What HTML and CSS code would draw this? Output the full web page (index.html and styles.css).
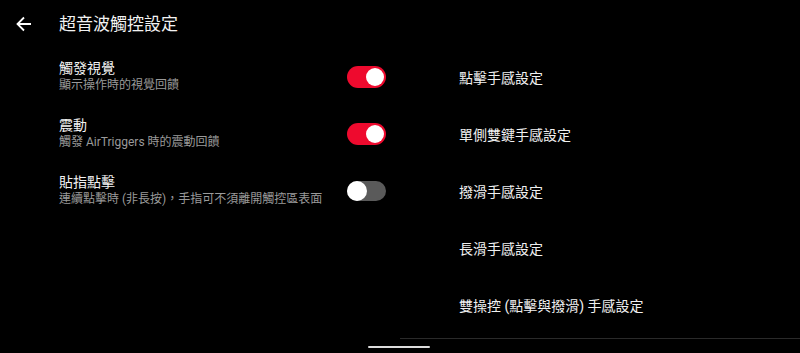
FILE: index.html
```html
<!DOCTYPE html>
<html lang="zh-Hant">
<head>
<meta charset="utf-8">
<link rel="stylesheet" href="styles.css">
</head>
<body>
<div class="screen">
  <header class="header">
    <svg class="back" width="16" height="16" viewBox="0 0 16 16">
      <path d="M15 8H2M8 1.5L1.5 8 8 14.5" fill="none" stroke="#fff" stroke-width="1.8"/>
    </svg>
    <h1 class="title">超音波觸控設定</h1>
  </header>
  <main class="content">
    <section class="left">
      <div class="row">
        <div class="texts">
          <div class="label">觸發視覺</div>
          <div class="desc">顯示操作時的視覺回饋</div>
        </div>
        <div class="switch on"><span class="thumb"></span></div>
      </div>
      <div class="row">
        <div class="texts">
          <div class="label">震動</div>
          <div class="desc">觸發 AirTriggers 時的震動回饋</div>
        </div>
        <div class="switch on"><span class="thumb"></span></div>
      </div>
      <div class="row">
        <div class="texts">
          <div class="label">貼指點擊</div>
          <div class="desc">連續點擊時 (非長按)，手指可不須離開觸控區表面</div>
        </div>
        <div class="switch off"><span class="thumb"></span></div>
      </div>
    </section>
    <section class="right">
      <div class="item">點擊手感設定</div>
      <div class="item">單側雙鍵手感設定</div>
      <div class="item">撥滑手感設定</div>
      <div class="item">長滑手感設定</div>
      <div class="item">雙操控 (點擊與撥滑) 手感設定</div>
      <div class="divider"></div>
    </section>
  </main>
  <div class="home"></div>
</div>
</body>
</html>
```

FILE: styles.css
```css
html, body {
  margin: 0;
  padding: 0;
  background: #000;
}
.screen {
  width: 800px;
  height: 353px;
  background: #000;
  position: relative;
  overflow: hidden;
  font-family: Roboto, "Noto Sans CJK TC", sans-serif;
  color: #f0f0f0;
}
.header {
  height: 48px;
  display: flex;
  align-items: center;
}
.back {
  margin-left: 16px;
  width: 16px;
  height: 16px;
}
.title {
  margin: 0 0 0 27px;
  font-size: 17px;
  font-weight: 400;
  color: #f2f2f2;
  line-height: 20px;
}
.content {
  display: flex;
}
.left {
  width: 400px;
  box-sizing: border-box;
  padding: 0 14px 0 59px;
}
.row {
  height: 57px;
  display: flex;
  align-items: center;
  justify-content: space-between;
}
.label {
  font-size: 14px;
  line-height: 17px;
  color: #f2f2f2;
}
.desc {
  font-size: 12px;
  line-height: 15px;
  color: #9a9a9a;
  margin-top: 1px;
}
.switch {
  width: 39px;
  height: 22px;
  border-radius: 11px;
  position: relative;
  flex: none;
}
.switch.on { background: #ee0a2e; }
.switch.off { background: #5a5a5a; height: 20px; border-radius: 10px; }
.thumb {
  position: absolute;
  top: 2px;
  width: 18px;
  height: 18px;
  border-radius: 50%;
  background: #fff;
}
.switch.on .thumb { right: 2px; }
.switch.off .thumb { left: 0; top: 0; width: 20px; height: 20px; }
.right {
  width: 400px;
  display: flex;
  flex-direction: column;
}
.item {
  height: 57px;
  display: flex;
  align-items: center;
  padding-left: 59px;
  font-size: 14px;
  color: #f0f0f0;
}
.divider {
  margin-top: 5px;
  height: 1px;
  background: #2a2a2a;
}
.home {
  position: absolute;
  left: 368px;
  top: 346px;
  width: 62px;
  height: 2px;
  border-radius: 1px;
  background: #dcdcdc;
}
```
